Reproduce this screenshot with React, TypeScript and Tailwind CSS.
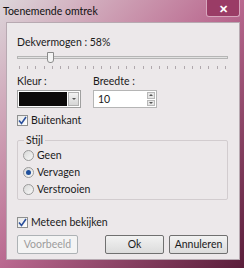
import React from "react";

function Check({ label }: { label: string }) {
  return (
    <div className="flex items-center gap-[3px]">
      <div className="w-[11px] h-[11px] border border-[#8e8f8f] bg-gradient-to-br from-[#e6e6e6] to-white flex items-center justify-center">
        <svg width="9" height="9" viewBox="0 0 9 9">
          <path d="M1 4.5 L3.5 7.5 L8 1" stroke="#2a4f9c" strokeWidth="1.6" fill="none" />
        </svg>
      </div>
      <span>{label}</span>
    </div>
  );
}

function Radio({ label, on }: { label: string; on?: boolean }) {
  return (
    <div className="flex items-center gap-[3px] h-[17px]">
      <div className="w-[11px] h-[11px] rounded-full border border-[#9a9a9a] bg-gradient-to-br from-[#d8d8d8] to-[#f8f8f8] flex items-center justify-center">
        {on && <div className="w-[5px] h-[5px] rounded-full bg-[#1f4f9c]" />}
      </div>
      <span>{label}</span>
    </div>
  );
}

export default function App() {
  const ticks = Array.from({ length: 26 });

  return (
    <div
      className="w-[244px] h-[268px] overflow-hidden flex flex-col bg-gradient-to-br from-[#dcd6da] via-[#b9688f] to-[#5a1d3a] text-[10.5px] text-[#1a1a1a]"
      style={{ fontFamily: 'Lato, "Noto Sans", sans-serif' }}
    >
      {/* title bar */}
      <div className="h-[22px] flex items-start justify-between">
        <span className="pl-[3px] pt-[4px] text-[10.5px] text-[#111]">Toenemende omtrek</span>
        <div className="mr-[4px] w-[34px] h-[17px] border border-[#d7a6bd] border-t-0 rounded-b-[3px] bg-[#9a3c66] flex items-center justify-center">
          <span className="text-white font-bold text-[11px] leading-none">✕</span>
        </div>
      </div>

      {/* client area */}
      <div className="ml-[6px] mr-[4px] h-[238px] bg-[#ece8ea] border border-[#b7a9b1] pl-[10px] pr-[11px] pt-[11px] flex flex-col">
        <div className="leading-[16px]">Dekvermogen : 58%</div>

        {/* slider */}
        <div className="relative mt-[2px] h-[18px]">
          <div className="absolute left-0 right-0 top-[4px] h-[3px] border border-[#b5b5b5] bg-[#e2e2e2]" />
          <div className="absolute left-[30px] top-[0px] w-[7px] h-[11px] border border-[#8b8b8b] bg-[#f4f4f4] rounded-b-[3px]" />
          <div className="absolute left-[2px] right-[2px] top-[14px] flex justify-between">
            {ticks.map((_, i) => (
              <div key={i} className="w-px h-[3px] bg-[#b0a8ad]" />
            ))}
          </div>
        </div>

        <div className="flex gap-[12px] mt-[3px]">
          <div className="flex flex-col">
            <span className="leading-[16px]">Kleur :</span>
            <div className="mt-[1px] w-[64px] h-[18px] border border-[#a0a0a0] bg-white flex p-[1px] gap-[1px]">
              <div className="flex-1 bg-[#0c0a0a]" />
              <div className="w-[11px] bg-gradient-to-b from-[#f2f2f2] to-[#d6d6d6] border border-[#b0b0b0] flex items-center justify-center">
                <div className="w-0 h-0 border-l-[2px] border-r-[2px] border-t-[2px] border-l-transparent border-r-transparent border-t-[#555]" />
              </div>
            </div>
          </div>
          <div className="flex flex-col">
            <span className="leading-[16px]">Breedte :</span>
            <div className="mt-[1px] w-[64px] h-[18px] border border-[#b5b5b5] bg-white flex">
              <span className="flex-1 pl-[4px] leading-[16px]">10</span>
              <div className="w-[10px] flex flex-col gap-px p-px">
                <div className="flex-1 bg-[#e6e6e6] border border-[#b8b8b8] flex items-center justify-center">
                  <div className="w-0 h-0 border-l-[2px] border-r-[2px] border-b-[2px] border-l-transparent border-r-transparent border-b-[#555]" />
                </div>
                <div className="flex-1 bg-[#e6e6e6] border border-[#b8b8b8] flex items-center justify-center">
                  <div className="w-0 h-0 border-l-[2px] border-r-[2px] border-t-[2px] border-l-transparent border-r-transparent border-t-[#555]" />
                </div>
              </div>
            </div>
          </div>
        </div>

        <div className="mt-[4px] leading-[16px]">
          <Check label="Buitenkant" />
        </div>

        {/* group box */}
        <div className="relative mt-[12px] h-[60px] border border-[#d2cccf] rounded-[2px] pl-[5px] pt-[6px]">
          <span className="absolute left-[6px] top-[-9px] px-[2px] bg-[#ece8ea] leading-[16px]">Stijl</span>
          <Radio label="Geen" />
          <Radio label="Vervagen" on />
          <Radio label="Verstrooien" />
        </div>

        <div className="mt-[14px] leading-[16px]">
          <Check label="Meteen bekijken" />
        </div>

        <div className="mt-[5px] flex">
          <div className="w-[62px] h-[19px] border border-[#adb2b5] rounded-[2px] bg-[#f4f4f4] text-[#9c9c9c] flex items-center justify-center">
            Voorbeeld
          </div>
          <div className="ml-[27px] w-[60px] h-[19px] border border-[#707070] rounded-[2px] bg-gradient-to-b from-[#f2f2f2] to-[#dcdcdc] flex items-center justify-center">
            Ok
          </div>
          <div className="ml-[5px] w-[60px] h-[19px] border border-[#707070] rounded-[2px] bg-gradient-to-b from-[#f2f2f2] to-[#dcdcdc] flex items-center justify-center">
            Annuleren
          </div>
        </div>
      </div>
    </div>
  );
}
